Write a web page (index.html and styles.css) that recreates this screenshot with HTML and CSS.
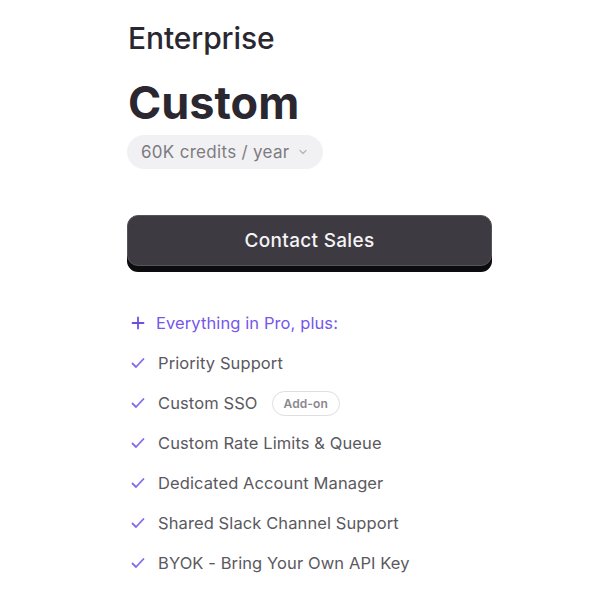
FILE: index.html
```html
<!DOCTYPE html>
<html lang="en">

<head>
    <meta charset="UTF-8">
    <meta name="viewport" content="width=device-width, initial-scale=1.0">
    <title>Enterprise plan</title>
    <link rel="stylesheet" href="styles.css">
</head>

<body>
    <div class="plan">
        <h2 class="plan-name">Enterprise</h2>
        <h1 class="price">Custom</h1>
        <button class="credits">
            60K credits / year
            <svg class="chevron" width="10" height="10" viewBox="0 0 10 10">
                <path d="M2 3.5 L5 6.5 L8 3.5" fill="none" stroke="#b4b4b8" stroke-width="1.2" stroke-linecap="round" stroke-linejoin="round" />
            </svg>
        </button>

        <button class="contact">Contact Sales</button>

        <ul class="features">
            <li class="feature lead">
                <svg class="icon" width="16" height="16" viewBox="0 0 16 16">
                    <path d="M8 2.5 V13.5 M2.5 8 H13.5" fill="none" stroke="#6d4fe0" stroke-width="1.8" stroke-linecap="round" />
                </svg>
                Everything in Pro, plus:
            </li>
            <li class="feature">
                <svg class="icon" width="16" height="16" viewBox="0 0 16 16">
                    <path d="M2.5 8.5 L6 12 L13.5 4" fill="none" stroke="#8469ec" stroke-width="1.8" stroke-linecap="round" stroke-linejoin="round" />
                </svg>
                Priority Support
            </li>
            <li class="feature">
                <svg class="icon" width="16" height="16" viewBox="0 0 16 16">
                    <path d="M2.5 8.5 L6 12 L13.5 4" fill="none" stroke="#8469ec" stroke-width="1.8" stroke-linecap="round" stroke-linejoin="round" />
                </svg>
                Custom SSO
                <span class="badge">Add-on</span>
            </li>
            <li class="feature">
                <svg class="icon" width="16" height="16" viewBox="0 0 16 16">
                    <path d="M2.5 8.5 L6 12 L13.5 4" fill="none" stroke="#8469ec" stroke-width="1.8" stroke-linecap="round" stroke-linejoin="round" />
                </svg>
                Custom Rate Limits &amp; Queue
            </li>
            <li class="feature">
                <svg class="icon" width="16" height="16" viewBox="0 0 16 16">
                    <path d="M2.5 8.5 L6 12 L13.5 4" fill="none" stroke="#8469ec" stroke-width="1.8" stroke-linecap="round" stroke-linejoin="round" />
                </svg>
                Dedicated Account Manager
            </li>
            <li class="feature">
                <svg class="icon" width="16" height="16" viewBox="0 0 16 16">
                    <path d="M2.5 8.5 L6 12 L13.5 4" fill="none" stroke="#8469ec" stroke-width="1.8" stroke-linecap="round" stroke-linejoin="round" />
                </svg>
                Shared Slack Channel Support
            </li>
            <li class="feature">
                <svg class="icon" width="16" height="16" viewBox="0 0 16 16">
                    <path d="M2.5 8.5 L6 12 L13.5 4" fill="none" stroke="#8469ec" stroke-width="1.8" stroke-linecap="round" stroke-linejoin="round" />
                </svg>
                BYOK - Bring Your Own API Key
            </li>
        </ul>
    </div>
</body>

</html>
```

FILE: styles.css
```css
* {
    margin: 0;
    padding: 0;
    box-sizing: border-box;
}

body {
    background-color: #ffffff;
    font-family: "Inter", "Noto Sans", sans-serif;
    color: #2a2731;
}

.plan {
    width: 366px;
    margin-left: 127px;
    padding-top: 19px;
    display: flex;
    flex-direction: column;
    align-items: flex-start;
}

.plan-name {
    font-size: 30px;
    font-weight: 500;
    letter-spacing: -0.1px;
    line-height: 38px;
    padding-left: 1px;
}

.price {
    font-size: 45px;
    font-weight: 700;
    letter-spacing: 0;
    line-height: 56px;
    margin-top: 18px;
    padding-left: 1px;
}

.credits {
    margin-top: 4px;
    height: 34px;
    padding: 0 15px 0 14px;
    border: none;
    border-radius: 17px;
    background-color: #f1f1f3;
    color: #7d7b82;
    font-family: inherit;
    font-size: 17px;
    letter-spacing: 0.3px;
    display: flex;
    align-items: center;
    gap: 9px;
}

.contact {
    margin-top: 46px;
    width: 365px;
    height: 51px;
    border: 1px solid #57535a;
    border-radius: 11px;
    background-color: #3e3a41;
    color: #f4f3f6;
    font-family: inherit;
    font-size: 19px;
    font-weight: 500;
    letter-spacing: 0.3px;
    box-shadow: 0 6px 0 #0c0b0d;
}

.features {
    list-style: none;
    margin-top: 45px;
    display: flex;
    flex-direction: column;
    gap: 16px;
}

.feature {
    display: flex;
    align-items: center;
    height: 24px;
    font-size: 16.5px;
    letter-spacing: 0.1px;
    color: #5b5960;
}

.feature .icon {
    margin-left: 3px;
    margin-right: 12px;
}

.feature.lead {
    color: #7557ea;
}

.feature.lead .icon {
    margin-right: 10px;
}

.badge {
    margin-left: 14px;
    height: 25px;
    padding: 0 11px;
    border: 1px solid #dedde2;
    border-radius: 13px;
    font-size: 12px;
    font-weight: 600;
    color: #8a888f;
    display: flex;
    align-items: center;
}
```
